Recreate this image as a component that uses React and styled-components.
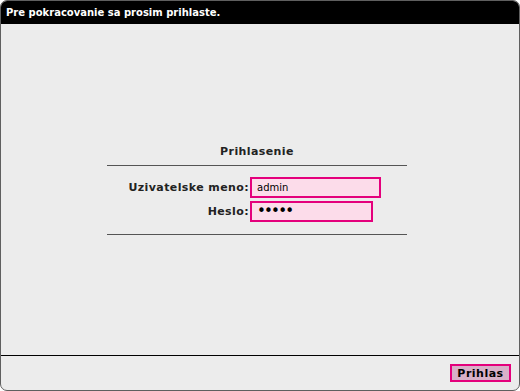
import React from "react";
import styled, { createGlobalStyle } from "styled-components";

const GlobalStyle = createGlobalStyle`
  html, body {
    margin: 0;
    padding: 0;
    background: #ffffff;
  }
  body {
    font-family: "DejaVu Sans", Verdana, sans-serif;
    font-size: 11px;
  }
`;

const App = () => {
  return (
    <>
      <GlobalStyle />
      <Window>
        <Header>Pre pokracovanie sa prosim prihlaste.</Header>
        <Content>
          <LoginBox>
            <Title>Prihlasenie</Title>
            <Fields>
              <Label htmlFor="user">Uzivatelske meno:</Label>
              <Input id="user" type="text" defaultValue="admin" $width={131} />
              <Label htmlFor="pass">Heslo:</Label>
              <Input id="pass" type="password" defaultValue="admin" $width={123} $secret />
            </Fields>
          </LoginBox>
        </Content>
        <Footer>
          <Button type="button">Prihlas</Button>
        </Footer>
      </Window>
    </>
  );
};

const Window = styled.div`
  box-sizing: border-box;
  width: 520px;
  height: 391px;
  display: flex;
  flex-direction: column;
  background: #ececec;
  border: 1px solid #5f5f5f;
  border-radius: 7px;
  overflow: hidden;
`;

const Header = styled.div`
  height: 24px;
  flex: none;
  background: #000000;
  color: #ffffff;
  font-weight: bold;
  font-size: 10px;
  line-height: 25px;
  padding-left: 6px;
  margin: -1px -1px 0 -1px;
`;

const Content = styled.div`
  flex: 1;
  display: flex;
  align-items: center;
  justify-content: center;
  border-bottom: 1px solid #000000;
`;

const LoginBox = styled.div`
  width: 300px;
  margin-right: 6px;
`;

const Title = styled.div`
  text-align: center;
  font-weight: bold;
  letter-spacing: 0.4px;
  color: #222222;
  padding-bottom: 7px;
  border-bottom: 1px solid #555555;
`;

const Fields = styled.div`
  display: grid;
  grid-template-columns: 143px 1fr;
  row-gap: 3px;
  align-items: center;
  padding: 11px 0 12px;
  border-bottom: 1px solid #555555;
`;

const Label = styled.label`
  text-align: right;
  font-weight: bold;
  letter-spacing: 0.4px;
  color: #222222;
  padding-right: 1px;
`;

const Input = styled.input`
  box-sizing: border-box;
  width: ${({ $width }) => $width}px;
  height: 21px;
  margin: 0;
  padding: 0 5px;
  background: #fcdcea;
  border: 2px solid #e4007c;
  font-family: "DejaVu Sans", Verdana, sans-serif;
  font-size: ${({ $secret }) => ($secret ? "15px" : "10px")};
  letter-spacing: ${({ $secret }) => ($secret ? "-1.8px" : "0")};
  color: #000000;
  outline: none;
`;

const Footer = styled.div`
  height: 34px;
  flex: none;
  display: flex;
  align-items: center;
  justify-content: flex-end;
  padding-right: 8px;
`;

const Button = styled.button`
  box-sizing: border-box;
  width: 61px;
  height: 18px;
  margin: 0;
  padding: 0;
  background: #d8b0c8;
  border: 2px solid #e4007c;
  font-family: "DejaVu Sans", Verdana, sans-serif;
  font-weight: bold;
  font-size: 11px;
  letter-spacing: 0.5px;
  color: #000000;
`;

export default App;
